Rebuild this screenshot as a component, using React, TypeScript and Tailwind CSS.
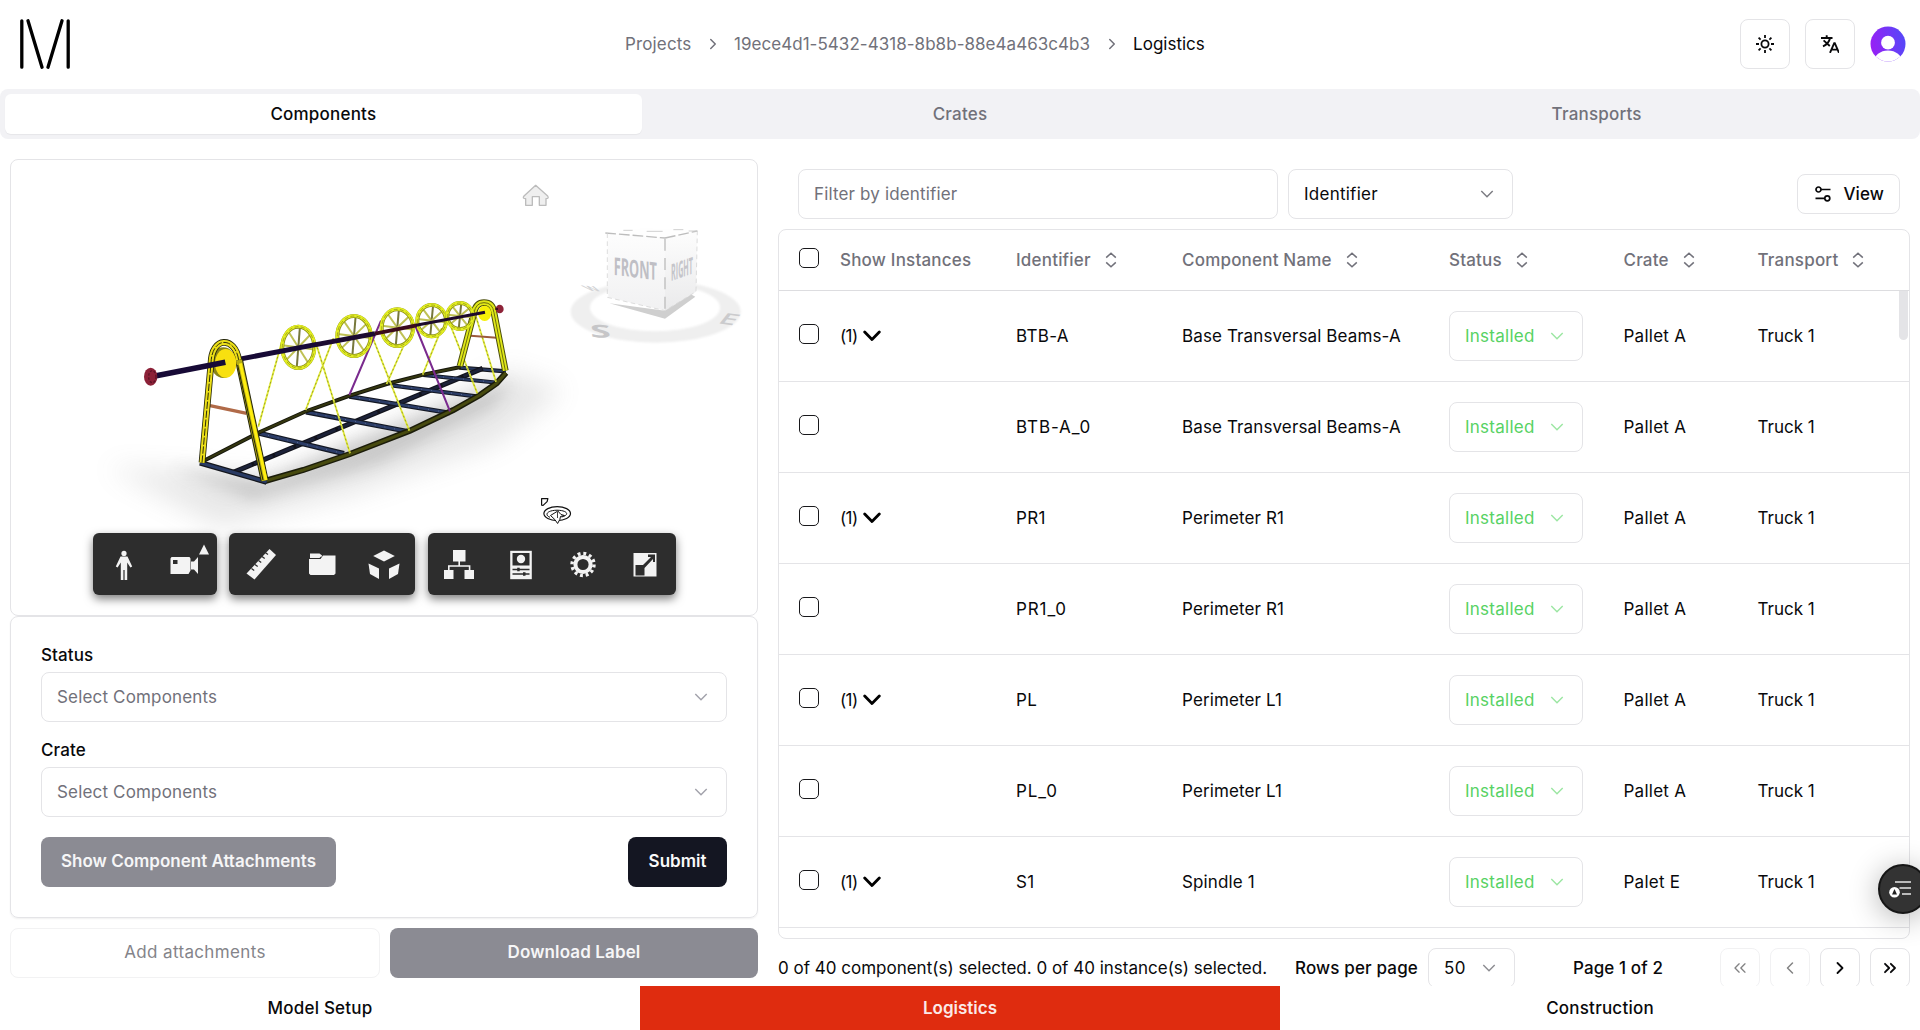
import React from "react";
import {
  ChevronLeft,
  ChevronRight,
  ChevronsLeft,
  ChevronsRight,
} from "lucide-react";

type Pt = [number, number];

const rows = [
  { parent: true, id: "BTB-A", name: "Base Transversal Beams-A", crate: "Pallet A" },
  { parent: false, id: "BTB-A_0", name: "Base Transversal Beams-A", crate: "Pallet A" },
  { parent: true, id: "PR1", name: "Perimeter R1", crate: "Pallet A" },
  { parent: false, id: "PR1_0", name: "Perimeter R1", crate: "Pallet A" },
  { parent: true, id: "PL", name: "Perimeter L1", crate: "Pallet A" },
  { parent: false, id: "PL_0", name: "Perimeter L1", crate: "Pallet A" },
  { parent: true, id: "S1", name: "Spindle 1", crate: "Palet E" },
];

const GRID = "grid grid-cols-[61px_176px_166px_267px_174.5px_134px_1fr] items-center";

function SmallChevron({ className = "" }: { className?: string }) {
  return (
    <svg viewBox="0 0 14 10" className={`h-[10px] w-[14px] shrink-0 ${className}`} fill="none" stroke="currentColor" strokeWidth="1.4">
      <path d="M1.3 2 7 7.8 12.7 2" />
    </svg>
  );
}

function SortIcon() {
  return (
    <svg viewBox="0 0 12 16" className="h-4 w-3 shrink-0" fill="none" stroke="currentColor" strokeWidth="1.5">
      <path d="M1.2 5.6 6 1.2l4.8 4.4M1.2 10.4 6 14.8l4.8-4.4" />
    </svg>
  );
}

function Logo() {
  return (
    <svg viewBox="0 0 50 50" className="h-[50px] w-[50px]" stroke="#000" strokeWidth="3.3" strokeLinecap="round">
      <path d="M1.8 1.8v46.4M48.2 1.8v46.4M8 1.8l14 46.4M42 1.8 28 48.2" />
    </svg>
  );
}

function Header() {
  return (
    <header className="flex h-[89px] items-center justify-between pr-[14px] pb-px pl-5 tracking-normal">
      <div className="w-[605px]">
        <Logo />
      </div>
      <nav className="flex flex-1 items-center text-[#71717a]">
        <span className="w-[109px] tracking-[0.14px]">
          <span className="flex items-center justify-between pr-[12px]">
            Projects <ChevronRight size={18} strokeWidth={2} />
          </span>
        </span>
        <span className="tracking-[0.04px]">19ece4d1-5432-4318-8b8b-88e4a463c4b3</span>
        <ChevronRight size={18} strokeWidth={2} className="mr-[12px] ml-[13px]" />
        <span className="text-[#09090b]">Logistics</span>
      </nav>
      <div className="flex items-center gap-[15px]">
        <button className="flex size-[50px] items-center justify-center rounded-lg border border-[#e4e4e7]">
          <svg viewBox="0 0 18 18" className="size-[18px]" fill="none" stroke="#09090b" strokeWidth="1.8">
            <circle cx="9" cy="9" r="3.6" />
            <path d="M9 0v3M9 15v3M0 9h3M15 9h3M2.6 2.6l2 2M13.4 13.4l2 2M2.6 15.4l2-2M13.4 4.6l2-2" />
          </svg>
        </button>
        <button className="flex size-[50px] items-center justify-center rounded-lg border border-[#e4e4e7]">
          <svg viewBox="0 0 18 18" className="size-[18px]" fill="none" stroke="#09090b" strokeWidth="1.9">
            <path d="M0 3h11.5M5.7 .3V3M2.6 5.4 8.8 11M9 3.2C8.2 6.8 5.8 9.6 2 11.3M9 17.8l4.2-9.6h.6l4.2 9.6M10.2 14.6h6.6" />
          </svg>
        </button>
        <svg viewBox="0 0 36 36" className="size-[36px]">
          <defs>
            <linearGradient id="avatar" x1="0" y1="0.6" x2="1" y2="0.4">
              <stop offset="0" stopColor="#9a1ff5" />
              <stop offset="1" stopColor="#5548f8" />
            </linearGradient>
            <clipPath id="avatarClip">
              <circle cx="18" cy="18" r="17.5" />
            </clipPath>
          </defs>
          <g clipPath="url(#avatarClip)">
            <rect width="36" height="36" fill="url(#avatar)" />
            <circle cx="18" cy="16.7" r="6.9" fill="#fff" />
            <ellipse cx="18" cy="36" rx="14" ry="11.5" fill="#fff" />
          </g>
        </svg>
      </div>
    </header>
  );
}

function Tabs() {
  return (
    <div className="grid h-[50px] grid-cols-3 rounded-lg bg-[#f2f2f5] p-[5px] font-medium tracking-[0.2px] text-[#71717a]">
      <div className="flex items-center justify-center rounded-md bg-white text-[#09090b] shadow-[0_1px_1px_rgba(0,0,0,0.05)]">Components</div>
      <div className="flex items-center justify-center">Crates</div>
      <div className="flex items-center justify-center">Transports</div>
    </div>
  );
}

const wheels: [number, number, number, number][] = [
  [535, 202, 48, 62],
  [702, 168, 50, 60],
  [832, 143, 47, 55],
  [935, 122, 43, 47],
  [1020, 108, 38, 39],
];

const cables: [Pt, Pt][] = [
  [[487, 180], [415, 440]],
  [[588, 190], [690, 520]],
  [[640, 175], [557, 390]],
  [[755, 165], [868, 452]],
  [[852, 195], [800, 312]],
  [[985, 120], [1072, 340]],
  [[965, 145], [908, 284]],
  [[1068, 110], [1128, 305]],
];

const crossBeams: [Pt, Pt][] = [
  [[415, 459], [672, 521]],
  [[558, 396], [862, 454]],
  [[688, 349], [990, 399]],
  [[815, 316], [1074, 350]],
  [[910, 285], [1132, 308]],
];

function Wheel({ cx, cy, rx, ry }: { cx: number; cy: number; rx: number; ry: number }) {
  const spokes = [0, 1, 2, 3].map((i) => {
    const a = (i * Math.PI) / 4 + 0.1;
    return { dx: Math.cos(a) * rx, dy: Math.sin(a) * ry, c: i === 2 ? "#77783c" : "#bfc155" };
  });
  return (
    <g fill="none">
      {spokes.map((s, i) => (
        <line key={i} x1={cx - s.dx} y1={cy - s.dy} x2={cx + s.dx} y2={cy + s.dy} stroke={s.c} strokeWidth="6" />
      ))}
      <ellipse cx={cx} cy={cy} rx={rx} ry={ry} stroke="#8d9018" strokeWidth="12" />
      <ellipse cx={cx} cy={cy} rx={rx + 1} ry={ry + 1} stroke="#e3ef20" strokeWidth="9" />
      <ellipse cx={cx} cy={cy} rx={rx} ry={ry} stroke="#85871c" strokeWidth="2" strokeDasharray="12 7" />
    </g>
  );
}

function Beam({ from, to, w, edge, fill, dash }: { from: Pt; to: Pt; w: number; edge: string; fill: string; dash?: string }) {
  return (
    <g>
      <line x1={from[0]} y1={from[1]} x2={to[0]} y2={to[1]} stroke={edge} strokeWidth={w} />
      <line x1={from[0]} y1={from[1]} x2={to[0]} y2={to[1]} stroke={fill} strokeWidth={w * 0.55} strokeDasharray={dash} />
    </g>
  );
}

function Model() {
  const nearRail = "M435 603 550 570 690 522 870 452 1000 390 1080 345 1130 310 1158 278";
  const farRail = "M246 545 420 456 560 393 692 346 800 312 910 284 1022 261";
  const rearFrame = "M1020 258 1062 98Q1068 68 1092 68 1118 68 1122 98L1156 272";
  const frontLeft = "M246 548 273 250C275 168 345 168 356 240";
  const frontRight = "M357 240 434 602";
  return (
    <g transform="translate(120 280) scale(.33333)">
      <path d="M-40 560 300 740 700 640 1130 490 1330 330 1160 270 700 500 440 590Z" fill="#777" opacity=".17" filter="url(#soft)" />
      <path d="M150 560 400 660 780 550 1120 380 1180 300 700 480 440 600Z" fill="#555" opacity=".22" filter="url(#soft2)" />

      <Beam from={[1018, 263]} to={[1158, 274]} w={13} edge="#14161c" fill="#27375c" />
      <Beam from={[340, 577]} to={[1088, 265]} w={15} edge="#12131c" fill="#1c2238" dash="60 8" />
      {crossBeams.map(([a, b], i) => (
        <g key={i}>
          <Beam from={a} to={b} w={16 - i} edge="#131722" fill="#2b3c66" />
          <line x1={a[0]} y1={a[1]} x2={b[0]} y2={b[1]} stroke="#8ea0c4" strokeWidth="2" strokeDasharray="2 28" />
        </g>
      ))}
      <path d={farRail} fill="none" stroke="#15160c" strokeWidth="12" />
      <path d={farRail} fill="none" stroke="#34360f" strokeWidth="6" />
      <path d={nearRail} fill="none" stroke="#1b1c0a" strokeWidth="18" />
      <path d={nearRail} fill="none" stroke="#474a0f" strokeWidth="9" />
      <Beam from={[240, 548]} to={[440, 606]} w={17} edge="#14161c" fill="#293a63" />

      {cables.map(([a, b], i) => (
        <g key={i}>
          <line x1={a[0]} y1={a[1]} x2={b[0]} y2={b[1]} stroke="#e3ec3a" strokeWidth="5.5" />
          <line x1={a[0]} y1={a[1]} x2={b[0]} y2={b[1]} stroke="#8c8f20" strokeWidth="2.5" strokeDasharray="6 7" />
        </g>
      ))}
      <path d="M783 122 688 345M885 135 990 394" stroke="#7a2a8e" strokeWidth="6" />

      <path d="M1052 167 1130 173" stroke="#9c5a3c" strokeWidth="6" />
      <path d={rearFrame} fill="none" stroke="#4b4e0c" strokeWidth="20" />
      <path d={rearFrame} fill="none" stroke="#e0e818" strokeWidth="14" />
      <path d={rearFrame} fill="none" stroke="#6b6e0c" strokeWidth="3" />

      {wheels.map(([cx, cy, rx, ry]) => (
        <Wheel key={cx} cx={cx} cy={cy} rx={rx} ry={ry} />
      ))}
      <ellipse cx="1094" cy="100" rx="20" ry="23" fill="#f6f008" />

      <path d="M355 238 590 193" stroke="#170a36" strokeWidth="15" />
      <path d="M588 194 765 161" stroke="#1c0b30" strokeWidth="14" />
      <path d="M765 161 890 136" stroke="#3b0a1c" strokeWidth="11" />
      <path d="M888 136 1095 97" stroke="#1d0a2c" strokeWidth="9" />
      <ellipse cx="1139" cy="87" rx="12" ry="13" fill="#8e2338" />
      <path d="M1126 87h8" stroke="#39101f" strokeWidth="6" />

      <path d="M270 377 380 400" stroke="#b06a48" strokeWidth="10" />
      <ellipse cx="310" cy="248" rx="38" ry="46" fill="#8a8416" />
      <g fill="none">
        <path d={frontLeft} stroke="#26270a" strokeWidth="20" />
        <path d={frontLeft} stroke="#ecdf18" strokeWidth="15" />
        <path d={frontLeft} stroke="#2b2b0a" strokeWidth="3" strokeDasharray="22 5" />
        <path d={frontRight} stroke="#26270a" strokeWidth="24" />
        <path d={frontRight} stroke="#b5ac14" strokeWidth="18" />
        <path d="M353 255 429 600" stroke="#26270a" strokeWidth="3" />
        <path d="M361 250 438 600" stroke="#ffee10" strokeWidth="9" />
      </g>
      <ellipse cx="317" cy="250" rx="32" ry="43" fill="#f8e010" />
      <path d="M105 288 316 247" stroke="#170a36" strokeWidth="17" />
      <ellipse cx="92" cy="290" rx="20" ry="27" fill="#8c2138" />
      <ellipse cx="97" cy="290" rx="11" ry="18" fill="none" stroke="#5b1226" strokeWidth="4" strokeDasharray="7 5" />
    </g>
  );
}

function ViewCube() {
  return (
    <g transform="translate(500 160) scale(.33333)" fontFamily="Open Sans, sans-serif" fontWeight="700">
      <path
        fillRule="evenodd"
        fill="#efefef"
        filter="url(#faint)"
        d="M212 455a255 93 0 1 0 510 0a255 93 0 1 0 -510 0M270 443a195 71 0 1 0 390 0a195 71 0 1 0 -390 0"
      />
      <text transform="matrix(2 .1 .1 .95 272 531)" fontSize="56" fill="#c6c6c8">S</text>
      <text transform="matrix(2 .25 -.75 .95 650 490)" fontSize="46" fontWeight="600" fill="#cbcbcd">E</text>
      <text transform="matrix(1 .05 .9 .55 268 392)" fontSize="40" fill="#d2d2d4">W</text>
      <path d="M328 430 495 476 586 410 560 396 495 452Z" fill="#cfcfcf" />
      <path d="M322 218 430 204 592 212 495 233Z" fill="#fefefe" />
      <path d="M322 218 495 233 495 452 325 412Z" fill="url(#faceA)" />
      <path d="M495 233 592 212 588 395 495 452Z" fill="url(#faceB)" />
      <path d="M316 219 495 234M495 234 592 213" stroke="#bdbdbd" strokeWidth="4" strokeDasharray="32 9" fill="none" />
      <path d="M495 236V452" stroke="#bdbdbd" strokeWidth="4" strokeDasharray="36 22" fill="none" />
      <path d="M322 220V412L495 452 588 395 592 213" stroke="#d6d6d6" strokeWidth="2.5" strokeDasharray="14 10" fill="none" />
      <path d="M370 211h28M440 214h48M520 209h30M566 213h26" stroke="#d0d0d0" strokeWidth="3" />
      <text transform="matrix(1 .13 0 1.36 341 344)" fontSize="54" textLength="130" lengthAdjust="spacingAndGlyphs" fill="#bfbfc5">FRONT</text>
      <text transform="matrix(1 -.34 0 1.4 513 363)" fontSize="50" textLength="66" lengthAdjust="spacingAndGlyphs" fill="#c5c5ca">RIGHT</text>
      <path d="M107 76 143 108Q148 116 138 116V136H118V110H97V136H77V116Q66 116 72 108Z" fill="#efefef" stroke="#bcbcbc" strokeWidth="4" strokeLinejoin="round" />
    </g>
  );
}

function OrbitCursor() {
  return (
    <g fill="#fff" stroke="#111" strokeWidth="1.2" strokeLinejoin="round">
      <path d="M541.6 498.6h6.3l-.8 3-4 3.8-1.5-.3Z" />
      <ellipse cx="557.2" cy="513.6" rx="13.3" ry="7" />
      <path d="M550 517.3C545 515.5 545.5 510.5 557 510.2 569 510.5 569 515.5 561.5 517" strokeWidth="1" fill="none" />
      <path d="M557.8 511 561 514.5 564.5 515.5 560.5 516.5 559.8 519.5 557.6 523.5 554.8 519.5 550.5 515.5Z" strokeWidth="1" />
      <path d="M557.5 512v6" strokeWidth=".8" />
    </g>
  );
}

const tools: React.ReactNode[][] = [
  [
    <>
      <circle cx="16" cy="5.4" r="2.6" />
      <path d="M12.5 8.6h7l4.7 10-1.8.9-3.2-5V32h-2.6V22h-1.2V32h-2.6V14.5l-3.2 5-1.8-.9Z" />
    </>,
    <>
      <path fillRule="evenodd" d="M1.5 9h18l1 1.5v12l-2 3.5H.5V10.5ZM3 12v4h4.5v-4Z" />
      <path d="M21 13.5h3L28 9v17l-4-4.5h-3Z" />
      <path d="M34-3.5 39 6.5H29Z" />
    </>,
  ],
  [
    <>
      <path d="M25.5 1 32 7 10.5 31.5 2.5 25.5Z" />
      <path d="m7.5 20.5 2.7 2M11 16.5l2.7 2M14.5 12.5l2.7 2M18 8.5l2.7 2M21.5 4.7l2.5 1.8" stroke="#2d2d2d" strokeWidth="1.3" />
    </>,
    <>
      <path d="M4 5.5h9.5l2.5 2v1H15l-1.500 1.500H4Z" />
      <path d="M3 11h11.5l2.5-3.500h12.500V25.500l-1.500 1.500H4.500L3 25.500Z" />
    </>,
    <>
      <path d="M16 2.5 26.8 8 16 13.5 5.2 8Z" />
      <path d="M.5 15.5 11 20.5V31L2 26Z" />
      <path d="M31.5 15.5 21 20.5V31L30 26Z" />
    </>,
  ],
  [
    <>
      <path d="M10 2h12.5v11.5H10ZM1 22h9.5v9H1ZM21.5 22H31v9h-9.5Z" />
      <path d="M16.2 13v5M5.8 23v-5h20.8v5" fill="none" stroke="#f3f3f3" strokeWidth="1.6" />
    </>,
    <>
      <path d="M5.2 2.8h21.6v28.4H5.2Z" />
      <path d="M7.5 5h17v12.5h-17Z" fill="#2d2d2d" />
      <circle cx="16" cy="11" r="4.2" />
      <path d="M7.5 21.5h17M7.5 26h17" stroke="#2d2d2d" strokeWidth="1.3" />
      <path d="M12.2 19.7h2.5v3.5h-2.5ZM18 24.3h2.5v3.5H18Z" fill="#2d2d2d" />
    </>,
    <>
      <circle cx="16" cy="16.5" r="7.6" fill="none" stroke="#f3f3f3" strokeWidth="4" />
      <circle cx="16" cy="16.5" r="11" fill="none" stroke="#f3f3f3" strokeWidth="3.4" strokeDasharray="2.9 2.86" />
    </>,
    <>
      <path d="M4.5 5h23v23.5h-23Z" />
      <path d="M15.5 15.5 22 9h-3V6.5h7V14h-2v-3L15.5 20v7.5H6.5V17H14Z" fill="#2d2d2d" />
    </>,
  ],
];

function Toolbar() {
  return (
    <div className="absolute top-[373px] left-[82px] flex gap-[12.4px]">
      {tools.map((group, i) => (
        <div key={i} className="flex h-[62px] rounded-md bg-[#2d2d2d] shadow-[0_4px_10px_rgba(0,0,0,0.5)]">
          {group.map((icon, j) => (
            <button key={j} className="flex size-[62px] items-center justify-center">
              <svg viewBox="0 0 32 32" className="size-8 overflow-visible" fill="#f3f3f3">
                {icon}
              </svg>
            </button>
          ))}
        </div>
      ))}
    </div>
  );
}

function Viewer() {
  return (
    <div className="relative h-[457px] shrink-0 rounded-lg border border-[#e4e4e7]">
      <svg viewBox="11 160 746 455" className="h-full w-full">
        <defs>
          <filter id="soft" x="-30%" y="-60%" width="160%" height="220%"><feGaussianBlur stdDeviation="40" /></filter>
          <filter id="soft2" x="-30%" y="-60%" width="160%" height="220%"><feGaussianBlur stdDeviation="24" /></filter>
          <filter id="faint"><feGaussianBlur stdDeviation="2.5" /></filter>
          <linearGradient id="faceA" x1="0" y1="0" x2="0" y2="1">
            <stop offset="0" stopColor="#fdfdfd" />
            <stop offset="1" stopColor="#f1f1f2" />
          </linearGradient>
          <linearGradient id="faceB" x1="0" y1="0" x2="0" y2="1">
            <stop offset="0" stopColor="#fdfdfd" />
            <stop offset="1" stopColor="#eaeaeb" />
          </linearGradient>
        </defs>
        <Model />
        <ViewCube />
        <OrbitCursor />
      </svg>
      <Toolbar />
    </div>
  );
}

function SelectField({ label }: { label: string }) {
  return (
    <div>
      <div className="mb-[5px] flex h-6 items-center font-medium">{label}</div>
      <div className="flex h-[50px] items-center justify-between rounded-lg border border-[#e4e4e7] pr-[18px] pl-[15px] tracking-[0.17px] text-[#71717a]">
        <span className="pb-px">Select Components</span>
        <SmallChevron className="text-[#a1a1aa]" />
      </div>
    </div>
  );
}

function LeftPanel() {
  return (
    <section className="flex w-[748px] flex-col">
      <Viewer />
      <div className="flex h-[302px] shrink-0 flex-col rounded-lg border border-[#e4e4e7] px-[30px] pt-[26px] shadow-[0_1px_2px_rgba(0,0,0,0.06)]">
        <div className="flex flex-col gap-4">
          <SelectField label="Status" />
          <SelectField label="Crate" />
        </div>
        <div className="mt-5 flex justify-between font-semibold tracking-normal text-[#fafafa]">
          <button className="h-[50px] w-[295px] rounded-lg bg-[#8b8b93] pb-[2px] text-[#f6f6f7]">Show Component Attachments</button>
          <button className="h-[50px] w-[99px] rounded-lg bg-[#141622] pb-[2px]">Submit</button>
        </div>
      </div>
      <div className="mt-[10px] flex justify-between">
        <button className="h-[50px] w-[370px] rounded-lg border border-[#f2f2f3] pb-[2px] tracking-[0.35px] text-[#84848a]">Add attachments</button>
        <button className="h-[50px] w-[368px] rounded-lg bg-[#8b8b93] pb-[2px] font-semibold text-[#f6f6f7]">Download Label</button>
      </div>
    </section>
  );
}

function Checkbox() {
  return <span className="mb-[5px] ml-5 block size-5 rounded-[5px] border-[1.5px] border-[#18181b]" />;
}

function HeadCell({ children }: { children: React.ReactNode }) {
  return (
    <div className="flex items-center gap-[14px]">
      {children}
      <SortIcon />
    </div>
  );
}

function DataTable() {
  return (
    <div className="h-[710px] shrink-0 overflow-hidden rounded-lg border border-[#e4e4e7]">
      <div className={`${GRID} h-[61px] border-b border-[#dddde0] font-medium tracking-[0.2px] text-[#71717a]`}>
        <Checkbox />
        <div>Show Instances</div>
        <HeadCell>Identifier</HeadCell>
        <HeadCell>Component Name</HeadCell>
        <HeadCell>Status</HeadCell>
        <HeadCell>Crate</HeadCell>
        <HeadCell>Transport</HeadCell>
      </div>
      <div className="relative">
        {rows.map((r) => (
          <div key={r.id} className={`${GRID} h-[91px] border-b border-[#e4e4e7]`}>
            <Checkbox />
            <div className="flex items-center gap-[5px] pb-px tracking-[-0.6px]">
              {r.parent && (
                <>
                  (1)
                  <svg viewBox="0 0 18 12" className="h-3 w-[18px]" fill="none" stroke="#000" strokeWidth="2.8" strokeLinecap="round" strokeLinejoin="round">
                    <path d="M1.7 2 9 9.5 16.3 2" />
                  </svg>
                </>
              )}
            </div>
            <div className={`pb-px ${r.parent ? "tracking-[0.3px]" : "tracking-[0.9px]"}`}>{r.id}</div>
            <div className="pb-px">{r.name}</div>
            <div className="flex h-[50px] w-[134px] items-center justify-between rounded-lg border border-[#e4e4e7] pr-[18px] pl-[15px] tracking-[0.25px] text-[#57d264]">
              <span className="pb-px">Installed</span>
              <SmallChevron className="text-[#9be6a2]" />
            </div>
            <div className="pb-px tracking-[0.25px]">{r.crate}</div>
            <div className="pb-px tracking-normal">Truck 1</div>
          </div>
        ))}
        <div className="absolute top-0 right-px h-[49px] w-[9px] rounded-b-full bg-[#e4e4e7]" />
      </div>
    </div>
  );
}

function PagerButton({ disabled, children }: { disabled?: boolean; children: React.ReactNode }) {
  return (
    <button className={`flex size-10 items-center justify-center rounded-lg border border-[#e4e4e7] ${disabled ? "opacity-50" : ""}`}>
      {children}
    </button>
  );
}

function RightPanel() {
  return (
    <section className="flex w-[1132px] flex-col">
      <div className="flex h-[70px] shrink-0 items-center pr-[10px] pl-5">
        <div className="flex h-[50px] w-[480px] items-center rounded-lg border border-[#e4e4e7] px-[15px] tracking-[0.15px] text-[#71717a]">Filter by identifier</div>
        <div className="ml-[10px] flex h-[50px] w-[225px] items-center justify-between rounded-lg border border-[#e4e4e7] pr-[18px] pl-[15px] tracking-[0.25px]">
          Identifier
          <SmallChevron className="text-[#7a7a80]" />
        </div>
        <button className="ml-auto flex h-10 w-[103px] items-center justify-between rounded-lg border border-[#e4e4e7] pr-[15px] pl-[17px] font-medium">
          <svg viewBox="0 0 16 16" className="size-4" fill="none" stroke="#09090b" strokeWidth="1.7">
            <circle cx="3.5" cy="3.5" r="2.5" />
            <circle cx="12.3" cy="12.3" r="2.5" />
            <path d="M6 3.5h9.5M.5 12.3h9.3" />
          </svg>
          View
        </button>
      </div>
      <DataTable />
      <div className="mt-[9px] flex shrink-0 items-center tracking-normal">
        <div className="w-[517px] whitespace-nowrap">0 of 40 component(s) selected. 0 of 40 instance(s) selected.</div>
        <div className="w-[133px] font-medium tracking-[0.15px] whitespace-nowrap">Rows per page</div>
        <div className="flex h-10 w-[87px] items-center justify-between rounded-lg border border-[#e4e4e7] pr-[18px] pl-[15px] tracking-[0.5px]">
          50
          <SmallChevron className="text-[#8b8b90]" />
        </div>
        <div className="ml-[58px] font-medium tracking-[0.1px] whitespace-nowrap">Page 1 of 2</div>
        <div className="ml-auto flex gap-[10px]">
          <PagerButton disabled><ChevronsLeft size={20} strokeWidth={1.6} /></PagerButton>
          <PagerButton disabled><ChevronLeft size={20} strokeWidth={1.8} /></PagerButton>
          <PagerButton><ChevronRight size={20} strokeWidth={2.2} /></PagerButton>
          <PagerButton><ChevronsRight size={20} strokeWidth={2.2} /></PagerButton>
        </div>
      </div>
    </section>
  );
}

export default function App() {
  return (
    <div className="relative flex h-[1030px] w-[1920px] flex-col overflow-hidden bg-white font-['Inter',sans-serif] text-[17px] leading-6 tracking-[0.12px] text-[#09090b]">
      <Header />
      <Tabs />
      <main className="flex h-[847px] justify-between overflow-hidden px-[10px] pt-5">
        <LeftPanel />
        <RightPanel />
      </main>
      <footer className="grid h-11 grid-cols-3 font-medium tracking-[0.22px]">
        <div className="flex items-center justify-center">Model Setup</div>
        <div className="flex items-center justify-center bg-[#df2c0f] font-semibold tracking-normal text-[#fbeae7]">Logistics</div>
        <div className="flex items-center justify-center">Construction</div>
      </footer>
      <button className="absolute top-[864px] left-[1878px] flex size-[50px] items-center rounded-full border-2 border-[#161616] bg-[#333] pl-[9px] shadow-[0_4px_30px_rgba(0,0,0,0.3)]">
        <svg viewBox="0 0 22 18" className="h-[18px] w-[22px]">
          <path d="M6 2h16M10.5 8H22M13 14h9" stroke="#e8e8e8" strokeWidth="1.5" />
          <circle cx="5.5" cy="12.3" r="5.3" fill="#fff" />
          <path d="M5.5 9 8 14.5H3Z" fill="#222" />
        </svg>
      </button>
    </div>
  );
}
